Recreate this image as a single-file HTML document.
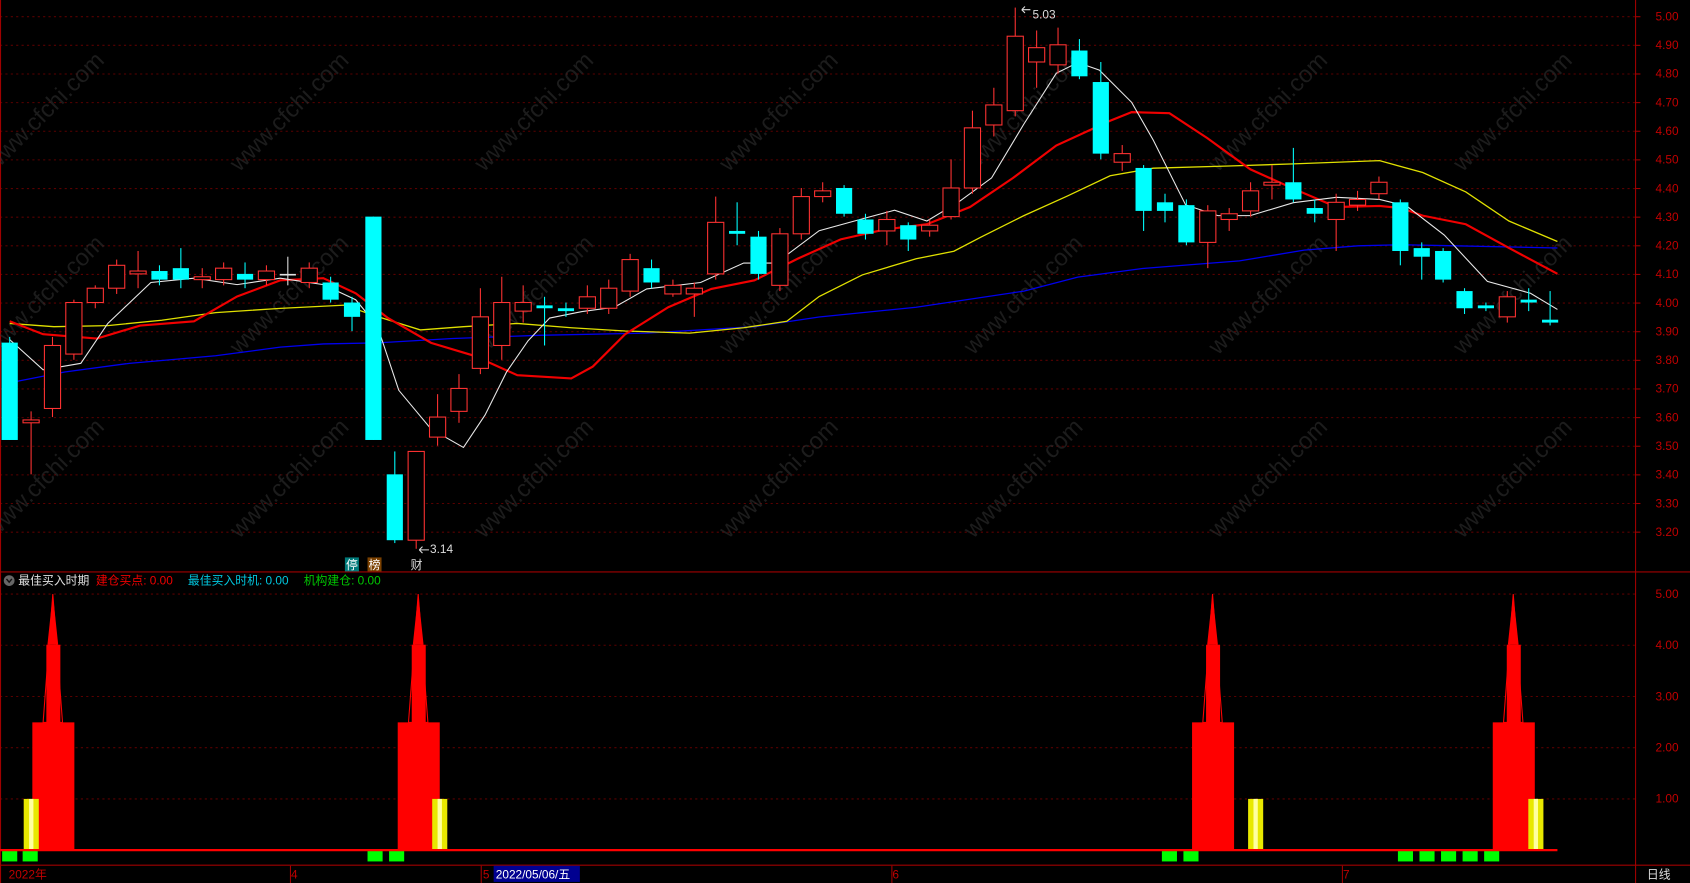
<!DOCTYPE html>
<html><head><meta charset="utf-8"><style>
html,body{margin:0;padding:0;background:#000;overflow:hidden}
svg{display:block}
text{font-family:"Liberation Sans","Noto Sans CJK SC",sans-serif}
</style></head><body>
<svg id="s" width="1690" height="883" viewBox="0 0 1568 819" preserveAspectRatio="none" xmlns="http://www.w3.org/2000/svg">
<rect width="1568" height="819" fill="#000"/>
<g id="grid" stroke="#5a0000" stroke-dasharray="2,3" stroke-width="1"></g>
<line x1="1517.5" y1="0" x2="1517.5" y2="819" stroke="#a00000"/>
<line x1="0" y1="530.5" x2="1568" y2="530.5" stroke="#a00000"/>
<line x1="0" y1="802.5" x2="1568" y2="802.5" stroke="#a00000"/>
<line x1="0.5" y1="0" x2="0.5" y2="819" stroke="#a00000"/>
<g id="axis" font-size="11" fill="#c00000"></g>
<g id="wm" fill="#333" font-size="22" opacity="0.55"></g>
<!-- MAs -->
<polyline fill="none" stroke="#0000ee" stroke-width="1.2" points="9,355 60,345 120,337 200,330 260,322 300,319 350,318 420,314 500,311 600,309 700,303 760,294 850,285 950,270 1000,257 1060,249 1150,242 1210,232 1260,228 1300,227 1350,228 1445,230"/>
<polyline fill="none" stroke="#e0e000" stroke-width="1.2" points="9,300 50,303 100,302 150,297 200,290 260,286 320,283 345,292 390,306 430,303 480,300 530,304 580,307 640,309 690,304 730,298 760,275 800,255 850,240 885,233 910,220 950,200 990,182 1030,163 1070,156 1140,154 1200,152 1280,149 1320,160 1360,178 1400,205 1445,224"/>
<polyline fill="none" stroke="#f00000" stroke-width="2" points="9,298 40,310 90,314 130,302 180,298 220,275 260,260 300,258 330,272 360,295 400,318 440,330 480,348 530,351 550,340 580,310 620,285 660,268 700,260 740,240 780,222 820,213 860,208 900,192 940,165 980,135 1030,112 1050,104 1085,105 1120,128 1160,157 1200,175 1240,192 1280,191 1300,193 1320,200 1360,208 1400,230 1445,254"/>
<polyline fill="none" stroke="#e8e8e8" stroke-width="1" points="9,315 40,343 75,337 100,300 140,262 180,258 220,264 260,258 300,264 330,278 350,302 370,362 400,398 430,415 450,385 470,345 490,316 510,295 540,289 570,285 600,268 650,262 690,244 720,244 760,214 800,203 830,195 860,205 890,187 920,165 950,115 980,68 1000,58 1020,65 1050,95 1070,130 1100,190 1130,200 1160,200 1200,188 1240,183 1280,185 1305,191 1340,218 1380,261 1420,272 1445,287"/>
<g id="c"></g>
<g id="low"></g>
<text x="958" y="17" font-size="11" fill="#ddd">5.03</text>
<path d="M948 9 L956 9 M948 9 L951 6 M948 9 L951 12" stroke="#ddd" fill="none"/>
<text x="399" y="513" font-size="11" fill="#ddd">3.14</text>
<path d="M389 510 L398 510 M389 510 L392 507 M389 510 L392 513" stroke="#ddd" fill="none"/>
<rect x="320" y="517" width="13" height="13" fill="#007a7a"/><text x="321" y="528" font-size="11" fill="#fff">停</text>
<rect x="341" y="517" width="13" height="13" fill="#7a4000"/><text x="342" y="528" font-size="11" fill="#fff">榜</text>
<text x="381" y="528" font-size="11" fill="#ddd">财</text>
<circle cx="8.5" cy="538.5" r="5" fill="#666"/><path d="M6 537 L8.5 540 L11 537" stroke="#111" fill="none" stroke-width="1.3"/>
<text x="17" y="542" font-size="11"><tspan fill="#e0e0e0">最佳买入时期</tspan><tspan dx="6" fill="#f00000">建仓买点: 0.00</tspan><tspan dx="14" fill="#00c8e0">最佳买入时机: 0.00</tspan><tspan dx="14" fill="#00c800">机构建仓: 0.00</tspan></text>
<g id="ind"></g>
<line x1="0" y1="788.5" x2="1445" y2="788.5" stroke="#ff0000" stroke-width="2"/>
<g font-size="11" fill="#c00000">
<text x="8" y="815">2022年</text>
<line x1="269.5" y1="803" x2="269.5" y2="819" stroke="#a00000"/><text x="270" y="815">4</text>
<line x1="446.5" y1="803" x2="446.5" y2="819" stroke="#a00000"/><text x="448" y="815">5</text>
<rect x="458" y="803" width="80" height="15" fill="#000090"/><text x="460" y="815" fill="#fff">2022/05/06/五</text>
<line x1="827.5" y1="803" x2="827.5" y2="819" stroke="#a00000"/><text x="828" y="815">6</text>
<line x1="1245.5" y1="803" x2="1245.5" y2="819" stroke="#a00000"/><text x="1246" y="815">7</text>
<text x="1528" y="815" fill="#ddd">日线</text>
</g>
</svg>
<script>
var NS="http://www.w3.org/2000/svg";
function el(p,t,a,txt){var e=document.createElementNS(NS,t);for(var k in a)e.setAttribute(k,a[k]);if(txt)e.textContent=txt;document.getElementById(p).appendChild(e);return e;}
function Y(p){return 15+(5.0-p)*265.6;}
// grid + axis
for(var i=0;i<19;i++){var p=5.0-i*0.1,y=Y(p);el('grid','line',{x1:0,x2:1517,y1:y+.5,y2:y+.5});el('axis','text',{x:1536,y:y+4},p.toFixed(2));el('axis','line',{x1:1517,x2:1522,y1:y+.5,y2:y+.5,stroke:'#a00000'});}
for(var i=1;i<=5;i++){var y=788-i*47.5;el('grid','line',{x1:0,x2:1517,y1:y+.5,y2:y+.5});el('axis','text',{x:1536,y:y+4},i.toFixed(2));}
// watermarks
for(var r=0;r<3;r++)for(var c=0;c<7;c++){var x=-5+c*227,y=160+r*170;el('wm','text',{x:x,y:y,transform:'rotate(-45 '+x+' '+y+')'},'www.cfchi.com');}
// candles [open,close,high,low]
var d=[[3.86,3.52,3.88,3.52],[3.58,3.59,3.62,3.40],[3.63,3.85,3.88,3.60],[3.82,4.00,4.01,3.80],[4.00,4.05,4.06,3.98],[4.05,4.13,4.15,4.03],[4.10,4.11,4.18,4.05],[4.11,4.08,4.13,4.06],[4.12,4.08,4.19,4.05],[4.08,4.09,4.12,4.05],[4.08,4.12,4.14,4.06],[4.10,4.08,4.14,4.05],[4.08,4.11,4.13,4.06],[4.10,4.10,4.16,4.06],[4.07,4.12,4.14,4.05],[4.07,4.01,4.09,4.00],[4.00,3.95,4.02,3.90],[4.30,3.52,4.30,3.52],[3.40,3.17,3.48,3.16],[3.17,3.48,3.48,3.14],[3.53,3.60,3.68,3.50],[3.62,3.70,3.75,3.58],[3.77,3.95,4.05,3.75],[3.85,4.00,4.09,3.80],[3.97,4.00,4.06,3.93],[3.99,3.98,4.02,3.85],[3.98,3.97,4.00,3.95],[3.98,4.02,4.06,3.96],[3.98,4.05,4.08,3.96],[4.04,4.15,4.17,4.02],[4.12,4.07,4.15,4.05],[4.03,4.06,4.08,4.02],[4.03,4.05,4.07,3.95],[4.10,4.28,4.37,4.08],[4.25,4.24,4.35,4.20],[4.23,4.10,4.25,4.08],[4.06,4.24,4.26,4.04],[4.24,4.37,4.40,4.22],[4.37,4.39,4.42,4.35],[4.40,4.31,4.41,4.30],[4.29,4.24,4.31,4.22],[4.25,4.29,4.32,4.20],[4.27,4.22,4.28,4.18],[4.25,4.27,4.29,4.23],[4.30,4.40,4.50,4.29],[4.40,4.61,4.67,4.38],[4.62,4.69,4.75,4.58],[4.67,4.93,5.03,4.65],[4.84,4.89,4.95,4.75],[4.83,4.90,4.96,4.80],[4.88,4.79,4.92,4.78],[4.77,4.52,4.84,4.50],[4.49,4.52,4.55,4.46],[4.47,4.32,4.48,4.25],[4.35,4.32,4.38,4.28],[4.34,4.21,4.36,4.20],[4.21,4.32,4.34,4.12],[4.29,4.31,4.33,4.25],[4.32,4.39,4.42,4.30],[4.41,4.42,4.48,4.36],[4.42,4.36,4.54,4.35],[4.33,4.31,4.36,4.28],[4.29,4.35,4.38,4.18],[4.34,4.36,4.39,4.32],[4.38,4.42,4.44,4.36],[4.35,4.18,4.36,4.13],[4.19,4.16,4.21,4.08],[4.18,4.08,4.19,4.07],[4.04,3.98,4.05,3.96],[3.99,3.98,4.00,3.97],[3.95,4.02,4.04,3.93],[4.01,4.00,4.05,3.97],[3.94,3.93,4.04,3.92]];
for(var i=0;i<d.length;i++){var c=d[i],x=9+i*19.85,up=c[1]>=c[0],col=up?'#ff3232':'#00ffff';if(Math.abs(c[1]-c[0])<0.006)col='#e0e0e0';
var t=Math.min(Y(c[0]),Y(c[1])),b=Math.max(Y(c[0]),Y(c[1]));if(b-t<1.5)b=t+1.5;
el('c','line',{x1:x,x2:x,y1:Y(c[2]),y2:Y(c[3]),stroke:col});
if(up&&col!='#e0e0e0'){el('c','rect',{x:x-7.5,y:t,width:15,height:b-t,fill:'#000',stroke:col});}else el('c','rect',{x:x-7.5,y:t,width:15,height:b-t,fill:col});}
// indicator
function tower(cx){var z=788;el('ind','rect',{x:cx-19,y:z-118,width:39,height:118,fill:'#ff0000'});el('ind','rect',{x:cx-6,y:z-190,width:13,height:190,fill:'#ff0000'});
el('ind','polygon',{points:(cx-9)+','+(z-118)+' '+cx+','+(z-237)+' '+(cx+9)+','+(z-118),fill:'none',stroke:'#ff0000'});el('ind','polygon',{points:(cx-5)+','+(z-190)+' '+cx+','+(z-237)+' '+(cx+5)+','+(z-190),fill:'#ff0000'});}
function yb(x){el('ind','rect',{x:x,y:741,width:14,height:47,fill:'#e8e800'});el('ind','rect',{x:x+5,y:741,width:4,height:47,fill:'#ffffa0'});}
function g(x){el('ind','rect',{x:x,y:789,width:14,height:10,fill:'#00ff00'});}
tower(49);tower(388);tower(1125);tower(1404);
yb(22);yb(401);yb(1158);yb(1418);
[2,21,341,361,1078,1098,1297,1317,1337,1357,1377].forEach(g);
</script>
</body></html>
